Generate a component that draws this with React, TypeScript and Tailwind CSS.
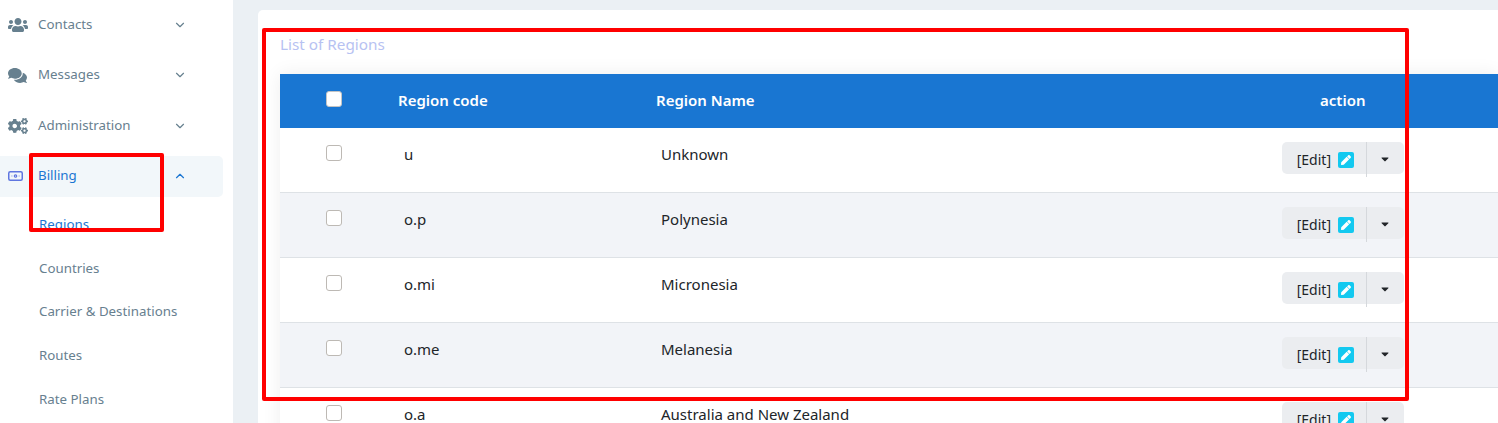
import { ChevronDown, ChevronUp } from "lucide-react"
import { FaUsers, FaComments, FaCogs, FaPen, FaCaretDown } from "react-icons/fa"

const menu = [
  { label: "Contacts", icon: <FaUsers size={20} /> },
  { label: "Messages", icon: <FaComments size={19} /> },
  { label: "Administration", icon: <FaCogs size={20} /> },
]

const subMenu = ["Countries", "Carrier & Destinations", "Routes", "Rate Plans"]

const regions = [
  { code: "u", name: "Unknown" },
  { code: "o.p", name: "Polynesia" },
  { code: "o.mi", name: "Micronesia" },
  { code: "o.me", name: "Melanesia" },
  { code: "o.a", name: "Australia and New Zealand" },
]

function Sidebar() {
  return (
    <aside className="w-[233px] shrink-0 bg-white pr-[10px] pt-[4px] text-[13.3px] text-[#67808f]">
      {menu.map((item) => (
        <div key={item.label} className="mb-[9.5px] flex h-[41px] items-center">
          <span className="flex w-[38px] justify-center pr-[3px]">{item.icon}</span>
          <span className="flex-1">{item.label}</span>
          <ChevronDown size={14} className="mr-[36px]" />
        </div>
      ))}
      <div className="flex h-[41px] items-center rounded-r-[5px] bg-[#f2f7fa] text-[#1b76d2]">
        <span className="flex w-[38px] justify-center pr-[7px]">
          <svg width="15" height="10" viewBox="0 0 15 10" fill="none" stroke="#5f76e0">
            <rect x="0.75" y="0.75" width="13.5" height="8.5" rx="1.5" strokeWidth="1.5" />
            <circle cx="7.5" cy="5" r="1.2" strokeWidth="1.2" />
            <path d="M3.5 5h.8M10.7 5h.8" strokeWidth="1.2" />
          </svg>
        </span>
        <span className="flex-1">Billing</span>
        <ChevronUp size={14} className="mr-[36px]" />
      </div>
      <div className="pl-[39px] pt-[6px]">
        <div className="flex h-[44.5px] items-center text-[#1b76d2]">Regions</div>
        {subMenu.map((label) => (
          <div key={label} className="flex h-[43.6px] items-center">
            {label}
          </div>
        ))}
      </div>
    </aside>
  )
}

function EditButton() {
  return (
    <div className="flex h-[32px] w-[122px] items-center rounded-[5px] bg-[#ebedf0] text-[14px] text-[#212529]">
      <div className="flex h-full w-[84px] items-center justify-end gap-[7px] pr-[12px]">
        <span className="pt-[2px]">[Edit]</span>
        <span className="mt-[4px] flex h-[16px] w-[16px] items-center justify-center rounded-[2px] bg-[#13c9f0] text-white">
          <FaPen size={10} />
        </span>
      </div>
      <div className="flex h-[35px] flex-1 self-start items-center justify-center border-l border-[#d5d8dc]">
        <FaCaretDown size={12} className="mt-[-1px] mr-[1px]" />
      </div>
    </div>
  )
}

function RegionTable() {
  return (
    <div className="shadow-[0_0_18px_rgba(0,0,0,0.07)]">
      <div className="grid h-[54px] grid-cols-[118px_258px_626px_216px] items-center bg-[#1976d2] text-[15px] font-semibold text-white">
        <span className="pb-[4px] pl-[46px]">
          <span className="block h-[16px] w-[16px] rounded-[3px] border border-[#c4c4c4] bg-white" />
        </span>
        <span className="pb-[1px]">Region code</span>
        <span className="pb-[1px]">Region Name</span>
        <span className="pb-[1px] pl-[38px]">action</span>
      </div>
      {regions.map((row, i) => (
        <div
          key={row.code}
          className={`grid h-[65px] grid-cols-[118px_258px_626px_216px] items-start border-b border-[#dee2e6] text-[15px] text-[#212529] ${
            i % 2 === 1 ? "bg-[#f2f4f8]" : "bg-white"
          }`}
        >
          <span className="pl-[46px] pt-[17px]">
            <span className="block h-[16px] w-[16px] rounded-[3px] border border-[#bdb9b4] bg-white" />
          </span>
          <span className="pl-[6px] pt-[16px] leading-[20px]">{row.code}</span>
          <span className="pl-[5px] pt-[16px] leading-[20px]">{row.name}</span>
          <span className="pt-[14px]">
            <EditButton />
          </span>
        </div>
      ))}
    </div>
  )
}

export default function App() {
  return (
    <div className="relative flex h-[423px] w-[1498px] overflow-hidden bg-[#ebf0f4] font-['Noto_Sans',sans-serif]">
      <Sidebar />
      <main className="ml-[25px] mt-[10px] flex-1 rounded-tl-[5px] bg-white pl-[22px]">
        <h2 className="flex h-[64px] items-start pt-[24px] text-[15.3px] font-normal leading-[20px] text-[#b7c2f2]">
          List of Regions
        </h2>
        <RegionTable />
      </main>
      <div className="absolute left-[29px] top-[153px] h-[79px] w-[135px] rounded-[2px] border-[4px] border-[#ff0000]" />
      <div className="absolute left-[262px] top-[28px] h-[373px] w-[1147px] rounded-[2px] border-[4px] border-[#ff0000]" />
    </div>
  )
}
